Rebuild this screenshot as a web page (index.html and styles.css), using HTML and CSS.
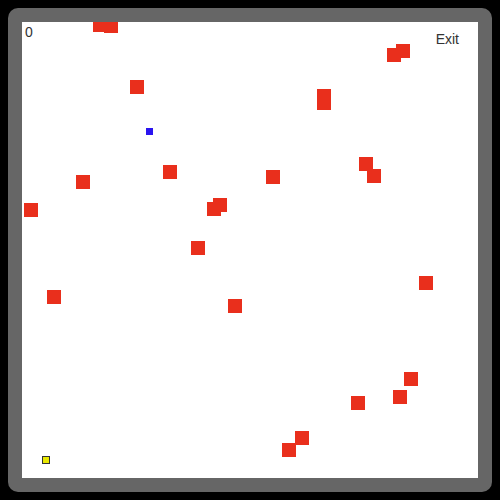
FILE: index.html
```html
<!DOCTYPE html>
<html>
<head>
<meta charset="utf-8">
<link rel="stylesheet" href="styles.css">
</head>
<body>
<div class="frame">
  <div class="field">
    <div class="hud">
      <span class="score">0</span>
      <span class="exit">Exit</span>
    </div>
    <div class="enemy" style="left:71px;top:-4px"></div>
    <div class="enemy" style="left:82px;top:-3px"></div>
    <div class="enemy" style="left:108px;top:58px"></div>
    <div class="enemy" style="left:365px;top:26px"></div>
    <div class="enemy" style="left:374px;top:22px"></div>
    <div class="enemy" style="left:295px;top:67px"></div>
    <div class="enemy" style="left:295px;top:74px"></div>
    <div class="enemy" style="left:337px;top:135px"></div>
    <div class="enemy" style="left:345px;top:147px"></div>
    <div class="enemy" style="left:141px;top:143px"></div>
    <div class="enemy" style="left:244px;top:148px"></div>
    <div class="enemy" style="left:54px;top:153px"></div>
    <div class="enemy" style="left:2px;top:181px"></div>
    <div class="enemy" style="left:185px;top:180px"></div>
    <div class="enemy" style="left:191px;top:176px"></div>
    <div class="enemy" style="left:169px;top:219px"></div>
    <div class="enemy" style="left:25px;top:268px"></div>
    <div class="enemy" style="left:206px;top:277px"></div>
    <div class="enemy" style="left:397px;top:254px"></div>
    <div class="enemy" style="left:382px;top:350px"></div>
    <div class="enemy" style="left:329px;top:374px"></div>
    <div class="enemy" style="left:371px;top:368px"></div>
    <div class="enemy" style="left:273px;top:409px"></div>
    <div class="enemy" style="left:260px;top:421px"></div>
    <div class="bonus" style="left:124px;top:106px"></div>
    <div class="player" style="left:20px;top:434px"></div>
  </div>
</div>
</body>
</html>
```
FILE: styles.css
```css
html, body {
  margin: 0;
  padding: 0;
  background: #000;
}
body {
  width: 500px;
  height: 500px;
  font-family: "Liberation Sans", Arial, sans-serif;
}
.frame {
  margin: 8px;
  width: 484px;
  height: 484px;
  box-sizing: border-box;
  padding: 14px;
  background: #666666;
  border-radius: 10px;
}
.field {
  position: relative;
  width: 456px;
  height: 456px;
  background: #fff;
  overflow: hidden;
}
.hud {
  position: absolute;
  top: 0;
  left: 0;
  right: 0;
  display: flex;
  justify-content: space-between;
  align-items: flex-start;
  padding: 2px 19px 0 3px;
  font-size: 14px;
  color: #333;
  z-index: 2;
}
.exit {
  margin-top: 7px;
}
.enemy {
  position: absolute;
  width: 14px;
  height: 14px;
  background: #e92f1c;
}
.bonus {
  position: absolute;
  width: 7px;
  height: 7px;
  background: #2a14f0;
}
.player {
  position: absolute;
  width: 6px;
  height: 6px;
  background: #e8e800;
  border: 1px solid #333;
}
```
